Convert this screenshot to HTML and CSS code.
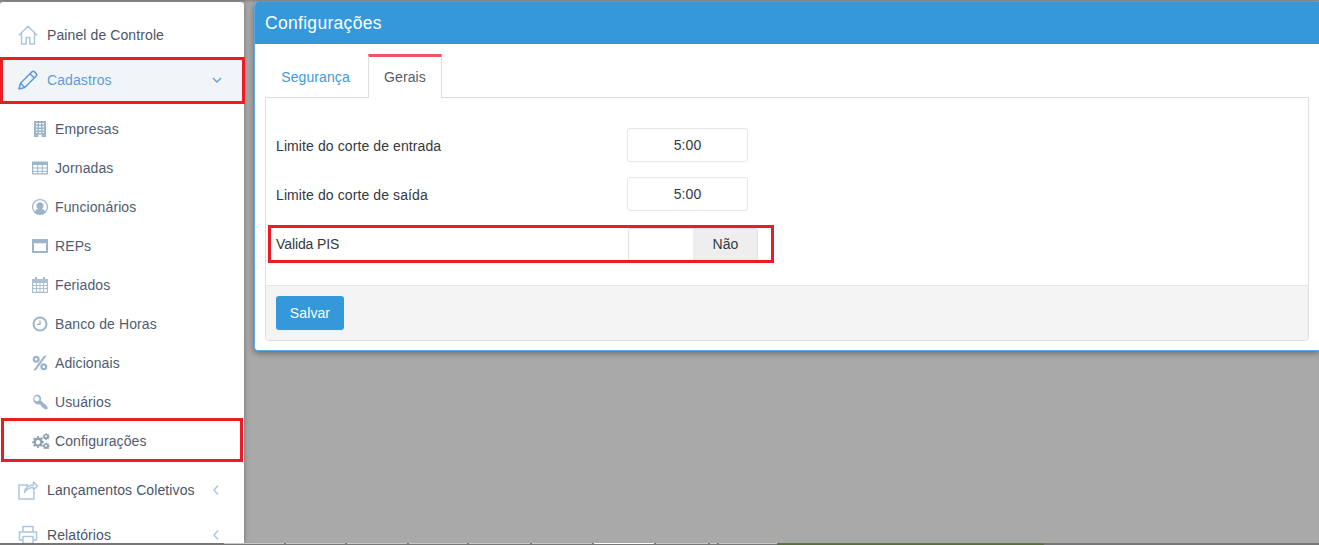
FILE: index.html
```html
<!DOCTYPE html>
<html lang="pt-BR">
<head>
<meta charset="utf-8">
<title>Configurações</title>
<link rel="stylesheet" href="styles.css">
</head>
<body>
<div class="app">
  <aside class="sidebar">
    <a class="item first"><svg class="ico-lg" viewBox="0 0 20 20"><path d="M.8 10.500 10 1.200l9.200 9.300M3.500 8v11h4.700v-6.500h3.600V19h4.700V8"/></svg><span class="label">Painel de Controle</span></a>
    <a class="item active"><svg class="ico-lg pen" viewBox="0 0 20 20"><path d="M1 19l1.500-5.800L13.700 2c.9-.9 2-.9 2.800-.1l1.600 1.600c.8.8.8 1.900-.1 2.800L6.800 17.500zM12 3.700l4.300 4.300M2.500 13.200l4.300 4.300"/></svg><span class="label">Cadastros</span><svg class="chev" viewBox="0 0 10 10"><path d="M1 3l4 4 4-4"/></svg></a>
    <nav class="sub">
      <a class="subitem"><svg class="ico" viewBox="0 0 16 16"><path class="fill" fill-rule="evenodd" d="M2 0h12v16H9.500v-2.500h-3V16H2zM4 2v1.500h1.500V2zM7 2v1.500h2V2zM10.500 2v1.500H12V2zM4 5v1.500h1.500V5zM7 5v1.500h2V5zM10.500 5v1.500H12V5zM4 8v1.500h1.500V8zM7 8v1.500h2V8zM10.500 8v1.500H12V8zM4 11v1h1.500v-1zM7 11v1h2v-1zM10.500 11v1H12v-1z"/></svg><span>Empresas</span></a>
      <a class="subitem"><svg class="ico" viewBox="0 0 16 16"><path class="fill" fill-rule="evenodd" d="M0 1.500h16v13H0zM1.200 5v2.400h4V5zM6.200 5v2.400h3.600V5zM10.800 5v2.400h4V5zM1.200 8.400v2.400h4V8.400zM6.200 8.400v2.400h3.600V8.400zM10.800 8.400v2.400h4V8.400zM1.200 11.700v1.600h4v-1.600zM6.200 11.700v1.600h3.600v-1.600zM10.800 11.700v1.600h4v-1.600z"/></svg><span>Jornadas</span></a>
      <a class="subitem"><svg class="ico" viewBox="0 0 16 16"><path class="fill" fill-rule="evenodd" d="M8 0a8 8 0 1 1 0 16A8 8 0 0 1 8 0zm0 1.300a6.700 6.700 0 0 0-5 11.200c.8-1.700 2-2.500 3-2.700a3.600 3.600 0 1 1 4 0c1 .2 2.200 1 3 2.700A6.700 6.700 0 0 0 8 1.300z"/></svg><span>Funcionários</span></a>
      <a class="subitem"><svg class="ico" viewBox="0 0 16 16"><path class="fill" fill-rule="evenodd" d="M1 1h14c.6 0 1 .4 1 1v12c0 .6-.4 1-1 1H1c-.6 0-1-.4-1-1V2c0-.6.4-1 1-1zM2 5.200v7.800h12V5.200z"/></svg><span>REPs</span></a>
      <a class="subitem"><svg class="ico" viewBox="0 0 16 16"><path class="fill cal" fill-rule="evenodd" d="M3 0h2v2h6V0h2v2h2c.6 0 1 .4 1 1v12c0 .6-.4 1-1 1H1c-.6 0-1-.4-1-1V3c0-.6.4-1 1-1h2zM1.200 6v2h2.800V6zM5 6v2h2.500V6zM8.500 6v2H11V6zM12 6v2h2.800V6zM1.200 9v2h2.800V9zM5 9v2h2.500V9zM8.500 9v2H11V9zM12 9v2h2.800V9zM1.200 12v2.800h2.800V12zM5 12v2.800h2.500V12zM8.500 12v2.800H11V12zM12 12v2.800h2.800V12z"/></svg><span>Feriados</span></a>
      <a class="subitem"><svg class="ico" viewBox="0 0 16 16"><path class="fill" fill-rule="evenodd" d="M8 .5a7.500 7.500 0 1 1 0 15 7.500 7.500 0 0 1 0-15zm0 2a5.500 5.500 0 1 0 0 11 5.500 5.500 0 0 0 0-11zM7.300 4.500h1.400V9H5V7.800h2.300z"/></svg><span>Banco de Horas</span></a>
      <a class="subitem"><svg class="ico" viewBox="0 0 16 16"><path class="fill" fill-rule="evenodd" d="M4.200.8a3.500 3.500 0 1 1 0 7 3.500 3.500 0 0 1 0-7zm0 2.200a1.300 1.300 0 1 0 0 2.600 1.300 1.300 0 0 0 0-2.600zM11.800 8.200a3.500 3.500 0 1 1 0 7 3.500 3.500 0 0 1 0-7zm0 2.200a1.300 1.300 0 1 0 0 2.600 1.300 1.300 0 0 0 0-2.600zM12 .8h2.600L4 15.200H1.400z"/></svg><span>Adicionais</span></a>
      <a class="subitem"><svg class="ico" viewBox="0 0 16 16"><path class="fill" fill-rule="evenodd" d="M4.800.5a4.300 4.300 0 0 1 3.900 6.100l6.800 5.900v2.700h-2.700l-.9-1-1.300-.1-.1-1.400-1.400-.1-.1-1.400-1.400-1A4.300 4.300 0 1 1 4.800.500zM4.800 2.300a2.500 2.500 0 1 0 0 5 2.500 2.500 0 0 0 0-5z"/></svg><span>Usuários</span></a>
      <a class="subitem"><svg class="ico gears" viewBox="0 0 18 16"><path class="fill" fill-rule="evenodd" d="M5.200 3l1.600 0 .3 1.500 1.100.4 1.300-.8 1.300 1.300-.8 1.300.4 1.100 1.500.3v1.700l-1.500.3-.4 1.100.8 1.300-1.300 1.300-1.300-.8-1.100.4-.3 1.500H5.200l-.3-1.500-1.100-.4-1.300.8-1.300-1.300.8-1.300-.4-1.100L.1 10.100V8.400l1.500-.3.4-1.100-.8-1.300 1.300-1.300 1.300.8 1.100-.4zM6 7.100a2.200 2.200 0 1 0 0 4.400 2.200 2.200 0 0 0 0-4.400zM14 0l.8.1.2.9.7.3.8-.4.6.7-.5.7.2.7.9.3v1l-.9.2-.3.7.5.8-.7.6-.7-.5-.7.3-.3.8h-1l-.2-.9-.7-.3-.7.5-.7-.7.4-.7-.3-.7-.9-.2v-1l.9-.2.3-.7-.5-.8.7-.6.7.5.7-.3zM14 2.200a1 1 0 1 0 0 2 1 1 0 0 0 0-2zM14 9.500l.8.1.2.9.7.3.8-.4.6.7-.5.7.2.7.9.3v1l-.9.2-.3.7.5.8-.7.6-.7-.5-.7.3-.3.6h-1l-.2-.7-.7-.3-.7.5-.7-.7.4-.7-.3-.7-.9-.2v-1l.9-.2.3-.7-.5-.8.7-.6.7.5.7-.3zM14 11.700a1 1 0 1 0 0 2 1 1 0 0 0 0-2z"/></svg><span>Configurações</span></a>
    </nav>
    <a class="item"><svg class="ico-lg" viewBox="0 0 20 20"><path d="M10 5H1v14h15v-8M6.500 12.500c.5-4.500 3.800-7.500 9-7.500V2l4 4-4 4V7.500c-3.800 0-7 1.500-9 5z"/></svg><span class="label">Lançamentos Coletivos</span><svg class="chev" viewBox="0 0 10 10"><path d="M6 .5L2 5l4 4.500"/></svg></a>
    <a class="item"><svg class="ico-lg" viewBox="0 0 20 20"><path d="M5 7V1.500h10V7M5 15H1.500V7h17v8H15M5 11.500h10v7H5zM15.500 9.500h.5"/></svg><span class="label">Relatórios</span><svg class="chev" viewBox="0 0 10 10"><path d="M6 .5L2 5l4 4.500"/></svg></a>
    <div class="mark mark-cad"></div>
    <div class="mark mark-cfg"></div>
  </aside>
  <main class="content">
    <section class="panel">
      <header class="panel-head">Configurações</header>
      <div class="panel-body">
        <div class="tabs">
          <a class="tab">Segurança</a>
          <a class="tab current">Gerais</a>
        </div>
        <div class="box">
          <form class="fields">
            <div class="row"><label class="row-label">Limite do corte de entrada</label><div class="time">5:00</div></div>
            <div class="row"><label class="row-label">Limite do corte de saída</label><div class="time">5:00</div></div>
            <div class="row row-pis"><label class="row-label">Valida PIS</label><div class="toggle"><span class="toggle-off"></span><span class="toggle-no">Não</span></div><div class="mark mark-pis"></div></div>
          </form>
          <footer class="box-foot"><button class="save" type="button">Salvar</button></footer>
        </div>
      </div>
    </section>
  </main>
</div>
<div class="taskbar">
  <i></i><i></i><i></i><i></i><i></i><i></i><i class="on"></i><i></i><i></i><i></i><i class="green"></i>
</div>
</body>
</html>
```
FILE: styles.css
```css
* { box-sizing: border-box; }
html, body { margin: 0; height: 100%; overflow: hidden; }
body {
  display: flex;
  flex-direction: column;
  width: 1319px;
  height: 545px;
  background: #a9a9a9;
  font-family: "Liberation Sans", Arial, sans-serif;
  font-size: 14px;
  letter-spacing: .1px;
  color: #3e4a5c;
}
.app {
  flex: 1;
  min-height: 0;
  display: flex;
  padding-top: 2px;
  align-items: flex-start;
  overflow: hidden;
  background: #a9a9a9;
  box-shadow: inset 0 3px 3px -2px rgba(0, 0, 0, .25);
}
.sidebar {
  position: relative;
  flex: none;
  width: 244px;
  height: 541px;
  background: #fff;
  border-radius: 3px 3px 0 0;
  box-shadow: 0 0 5px rgba(0, 0, 0, .35);
  padding-top: 11px;
}
.item {
  display: flex;
  align-items: center;
  height: 45px;
  padding-left: 18px;
  padding-right: 22px;
  color: #4a5568;
}
.item.first { height: 44px; }
.item.active { background: #f2f5f8; color: #5d9cdc; }
.ico-lg {
  flex: none;
  width: 20px;
  height: 20px;
  margin-right: 9px;
  fill: none;
  stroke: #adc6de;
  stroke-width: 1.5;
  stroke-linejoin: round;
}
.pen { stroke: #5d9cdc; stroke-width: 1.6; }
.label { flex: 1; }
.chev {
  flex: none;
  width: 10px;
  height: 10px;
  fill: none;
  stroke: #a9c2dc;
  stroke-width: 1.3;
}
.active .chev { stroke: #5d9cdc; }
.sub { padding: 7px 0 7px; }
.subitem {
  display: flex;
  align-items: center;
  height: 39px;
  padding-left: 32px;
  color: #505c70;
}
.ico {
  flex: none;
  width: 16px;
  height: 16px;
  margin-right: 7px;
}
.ico.gears { width: 18px; margin-right: 5px; }
.fill { fill: #9db5ca; }
.fill.cal { fill: #abc0d2; }
.gears .fill { fill: #8fa3b5; }
.mark {
  position: absolute;
  border: 3px solid #ed1c24;
  pointer-events: none;
}
.mark-cad { left: 0; top: 55px; width: 245px; height: 47px; }
.mark-cfg { left: 1px; top: 416px; width: 242px; height: 44px; }
.content {
  flex: 1;
  min-width: 0;
  padding-left: 10px;
}
.panel {
  height: 349px;
  background: #fff;
  border-left: 1px solid #5fa8e0;
  border-bottom: 1px solid #5fa8e0;
  border-radius: 4px 0 0 4px;
  box-shadow: 0 2px 6px rgba(0, 0, 0, .4);
  overflow: hidden;
}
.panel-head {
  height: 42px;
  padding: 11px 10px 0;
  background: #3498db;
  color: #fff;
  font-size: 17.5px;
  letter-spacing: .3px;
  line-height: 20px;
}
.panel-body { padding: 10px 10px 0; }
.tabs { display: flex; height: 44px; position: relative; }
.tab {
  display: flex;
  align-items: center;
  justify-content: center;
  color: #3d9ae0;
  width: 103px;
  padding: 1px 2px 0 0;
}
.tab.current {
  width: 74px;
  color: #555c68;
  background: #fff;
  border: 1px solid #ddd;
  border-top: 3px solid #ef5462;
  border-bottom: 0;
  height: 44px;
  padding: 0 0 2px;
  margin-bottom: -1px;
  position: relative;
  z-index: 1;
}
.box {
  height: 244px;
  display: flex;
  flex-direction: column;
  border: 1px solid #ddd;
  border-radius: 0 0 4px 4px;
  margin-top: -1px;
}
.fields { flex: 1; padding: 30px 10px 0; }
.row {
  position: relative;
  display: flex;
  align-items: center;
  height: 34px;
  margin-bottom: 15px;
  color: #33393f;
}
.row-label { width: 351px; flex: none; padding-top: 2px; }
.time {
  width: 121px;
  height: 34px;
  display: flex;
  align-items: center;
  justify-content: center;
  border: 1px solid #e5e6e7;
  border-radius: 3px;
  color: #33393f;
}
.row-pis { margin-top: 17px; height: 33px; }
.row-pis .row-label { padding: 0 0 2px; letter-spacing: -.1px; }
.toggle {
  display: flex;
  width: 130px;
  height: 33px;
  margin-left: 1px;
  border: 1px solid #ddd;
  border-radius: 3px;
  overflow: hidden;
}
.toggle-off { width: 64px; background: #fff; }
.toggle-no {
  flex: 1;
  display: flex;
  align-items: center;
  justify-content: center;
  padding: 0 0 1px 1px;
  background: #eee;
  color: #33393f;
}
.mark-pis { left: -8px; top: -3px; width: 506px; height: 38px; }
.box-foot {
  height: 55px;
  padding: 10px;
  background: #f4f4f4;
  border-top: 1px solid #e5e5e5;
  border-radius: 0 0 4px 4px;
}
.save {
  display: block;
  width: 68px;
  height: 34px;
  padding: 0;
  border: 0;
  border-radius: 3px;
  background: #3498db;
  color: #fff;
  font: inherit;
  letter-spacing: inherit;
}
.taskbar {
  flex: none;
  height: 2px;
  display: grid;
  grid-template-columns: 60px 59px 60px 58px 61px 60px 60px 52px 7px 58px 265px;
  column-gap: 2px;
  padding-left: 224px;
  background: #777;
}
.taskbar i { display: block; border-top: 1px solid #c8c8c8; }
.taskbar i.on { border-top-color: #fff; }
.taskbar i.green { background: #5c6e3f; border-top-color: #62753f; margin-left: -2px; }
```
